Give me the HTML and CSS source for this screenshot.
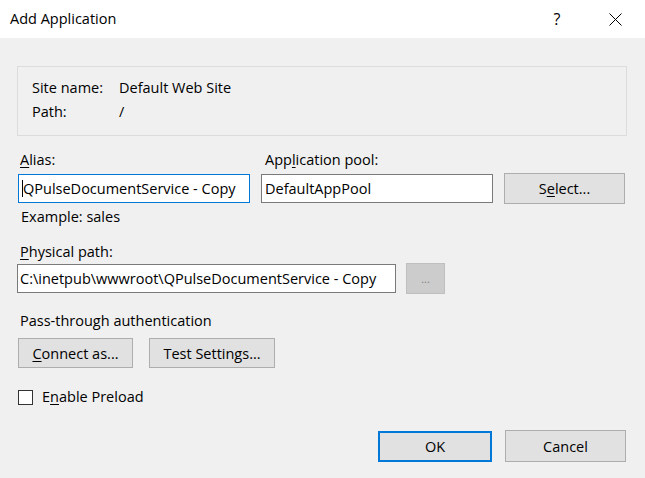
FILE: index.html
```html
<!DOCTYPE html>
<html lang="en">
<head>
<meta charset="utf-8">
<title>Add Application</title>
<link rel="stylesheet" href="styles.css">
</head>
<body>
<div class="dialog">
  <header class="titlebar">
    <span class="title">Add Application</span>
    <span class="help">?</span>
    <span class="close">
      <svg width="13" height="13" viewBox="0 0 13 13"><path d="M0.5 0.5 L12.5 12.5 M12.5 0.5 L0.5 12.5" stroke="#000" stroke-width="1" fill="none"/></svg>
    </span>
  </header>
  <main class="content">
    <section class="group">
      <div class="info-row"><span class="key">Site name:</span><span>Default Web Site</span></div>
      <div class="info-row"><span class="key">Path:</span><span>/</span></div>
    </section>

    <div class="fields-row">
      <div class="field alias">
        <div class="label"><u>A</u>lias:</div>
        <div class="input focused"><span class="caret"></span>QPulseDocumentService - Copy</div>
      </div>
      <div class="field pool">
        <div class="label">App<u>l</u>ication pool:</div>
        <div class="input">DefaultAppPool</div>
      </div>
      <button class="btn select">S<u>e</u>lect...</button>
    </div>
    <div class="hint">Example: sales</div>

    <div class="label path-label"><u>P</u>hysical path:</div>
    <div class="path-row">
      <div class="input path-input">C:\inetpub\wwwroot\QPulseDocumentService - Copy</div>
      <button class="btn browse" disabled>...</button>
    </div>

    <div class="label auth-label">Pass-through authentication</div>
    <div class="auth-row">
      <button class="btn connect"><u>C</u>onnect as...</button>
      <button class="btn test">Test Settings...</button>
    </div>

    <label class="check-row"><span class="checkbox"></span><span>E<u>n</u>able Preload</span></label>

    <div class="actions">
      <button class="btn ok">OK</button>
      <button class="btn cancel">Cancel</button>
    </div>
  </main>
</div>
</body>
</html>
```
FILE: styles.css
```css
html, body {
  margin: 0;
  padding: 0;
}
body {
  width: 645px;
  height: 478px;
  background: #f0f0f0;
  font-family: "Open Sans", "Noto Sans", sans-serif;
  font-size: 14.5px;
  color: #000;
  overflow: hidden;
}
u { text-decoration: underline; text-underline-offset: 2px; }

.titlebar {
  height: 38px;
  background: #fff;
  display: flex;
  align-items: center;
  padding-left: 10px;
}
.title {
  flex: 1;
  font-size: 14.5px;
  line-height: 20px;
}
.help {
  width: 12px;
  text-align: center;
  font-size: 16px;
  line-height: 20px;
  margin-right: 46px;
}
.close {
  display: flex;
  width: 13px;
  height: 13px;
  margin-right: 23px;
}

.content {
  padding: 28px 18px 0 17px;
}

.group {
  height: 70px;
  box-sizing: border-box;
  border: 1px solid #dcdcdc;
  padding: 9px 14px;
}
.info-row {
  display: flex;
  line-height: 24px;
}
.key { width: 87px; }

.label { line-height: 20px; }

.fields-row {
  display: flex;
  align-items: flex-end;
  margin-top: 14px;
}
.field .label { margin-bottom: 4px; }
.alias { width: 232px; margin-left: 1px; }
.alias .label { padding-left: 2px; }
.pool { width: 232px; margin-left: 11px; }
.pool .label { padding-left: 4px; }

.input {
  height: 29px;
  box-sizing: border-box;
  background: #fff;
  border: 1px solid #7a7a7a;
  padding: 0 3px;
  line-height: 27px;
  white-space: nowrap;
  overflow: hidden;
  display: flex;
  align-items: center;
}
.input.focused { border-color: #0078d7; }
.caret {
  display: inline-block;
  width: 1px;
  height: 17px;
  background: #000;
}

.btn {
  font-family: inherit;
  font-size: 14.5px;
  color: #000;
  background: #e1e1e1;
  border: 1px solid #adadad;
  padding: 0;
  margin: 0;
  height: 31px;
  box-sizing: border-box;
}
.select { width: 121px; margin-left: 11px; margin-bottom: -1px; }

.hint {
  line-height: 20px;
  margin-top: 4px;
  padding-left: 4px;
}

.path-label { margin-top: 15px; padding-left: 3px; }
.path-row {
  display: flex;
  align-items: center;
  margin-top: 1px;
}
.path-input { width: 379px; padding-left: 2px; }
.browse {
  width: 39px;
  margin-left: 10px;
  background: #cccccc;
  border-color: #bfbfbf;
  color: #838383;
  font-size: 11px;
}

.auth-label { margin-top: 17px; padding-left: 3px; }
.auth-row {
  display: flex;
  margin-top: 7px;
  margin-left: 1px;
  gap: 16px;
}
.connect { width: 115px; height: 30px; }
.test { width: 126px; height: 30px; }

.check-row {
  display: flex;
  align-items: center;
  gap: 9px;
  line-height: 20px;
  margin-top: 19px;
  margin-left: 1px;
}
.checkbox {
  width: 15px;
  height: 15px;
  box-sizing: border-box;
  border: 1px solid #333;
  background: #fff;
}

.actions {
  display: flex;
  justify-content: flex-end;
  align-items: center;
  gap: 13px;
  margin-top: 23px;
  margin-right: 1px;
}
.ok {
  width: 114px;
  border: 2px solid #0078d7;
}
.cancel { width: 121px; height: 32px; }
```
